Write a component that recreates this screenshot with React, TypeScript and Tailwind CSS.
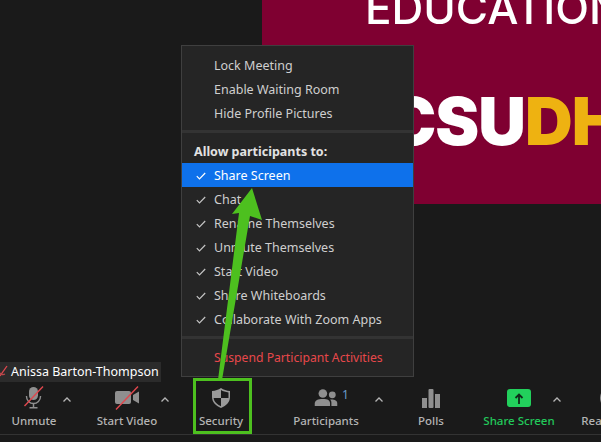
import { ReactNode } from 'react';

const font = { fontFamily: '"Noto Sans", "Open Sans", sans-serif' };

const permissions = ['Share Screen', 'Chat', 'Rename Themselves', 'Unmute Themselves', 'Start Video', 'Share Whiteboards', 'Collaborate With Zoom Apps'];

function Check({ light }: { light?: boolean }) {
  return (
    <svg width="10" height="8" viewBox="0 0 10 8" className="mr-[8px] ml-[14px]" fill="none">
      <path d="M0.8 4.2 L3.5 7 L9.2 1" stroke={light ? '#ffffff' : '#c4c4c4'} strokeWidth="1.2" />
    </svg>
  );
}

function Chevron({ className }: { className: string }) {
  return (
    <div className={`w-[8px] h-[40px] pt-[12px] shrink-0 ${className}`}>
      <svg width="8" height="5" viewBox="0 0 8 5" fill="none">
        <path d="M0.5 4.5 L4 1 L7.5 4.5" stroke="#b5b5b5" strokeWidth="1.3" />
      </svg>
    </div>
  );
}

function ToolItem({ label, className, green, children }: { label: string; className: string; green?: boolean; children: ReactNode }) {
  return (
    <div className={`flex flex-col items-center shrink-0 ${className}`}>
      <div className="h-[26px] flex items-center justify-center">{children}</div>
      <div className={`mt-[2px] text-[11.5px] leading-[16px] font-medium whitespace-nowrap ${green ? 'text-[#22c95a]' : 'text-[#b4b4b4]'}`}>{label}</div>
    </div>
  );
}

function Toolbar() {
  return (
    <div className="flex h-[49px] mb-[7px] border-b border-[#333333] pt-[7px] box-content">
      <ToolItem label="Unmute" className="ml-[5px] w-[58px]">
        <svg width="20" height="24" viewBox="0 0 20 24" fill="none">
          <rect x="5" y="1" width="9" height="13" rx="4.5" fill="#8f8f8f" />
          <path d="M2.5 10 V10.5 A7 7 0 0 0 16.5 10.5 V10" stroke="#8f8f8f" strokeWidth="1.4" />
          <path d="M9.5 17 V21 M5.5 21.7 H13.5" stroke="#8f8f8f" strokeWidth="1.5" />
          <path d="M0.5 20 L19 0.5" stroke="#e0484e" strokeWidth="1.4" />
        </svg>
      </ToolItem>
      <Chevron className="" />
      <ToolItem label="Start Video" className="ml-[22px] w-[68px]">
        <svg width="24" height="24" viewBox="0 0 24 24" fill="none">
          <rect x="0" y="5" width="16" height="13" rx="2" fill="#8f8f8f" />
          <path d="M18 9 L24 5.5 V17.5 L18 14 Z" fill="#8f8f8f" />
          <path d="M1 23.5 L23 0.5" stroke="#e0484e" strokeWidth="1.4" />
        </svg>
      </ToolItem>
      <Chevron className="" />
      <ToolItem label="Security" className="ml-[21px] w-[62px]">
        <svg width="18" height="20" viewBox="0 0 18 20">
          <path d="M9 0 C11.5 1.8 14.5 2.8 18 3 V9 C18 14 14.5 17.8 9 20 C3.5 17.8 0 14 0 9 V3 C3.5 2.8 6.5 1.8 9 0 Z" fill="#9a9a9a" />
          <path d="M9 2 C11 3.3 13.5 4.2 16.5 4.4 V10 H9 Z" fill="#1a1a1a" />
          <path d="M1.6 10 H9 V18.2 C5 16.4 2 13.8 1.6 10 Z" fill="#1a1a1a" />
        </svg>
      </ToolItem>
      <ToolItem label="Participants" className="ml-[39px] w-[70px]">
        <div className="relative w-[24px] flex items-center">
          <svg width="24" height="18" viewBox="0 0 26 20" className="shrink-0">
            <circle cx="9.5" cy="5" r="4.8" fill="#8f8f8f" />
            <circle cx="20" cy="6.5" r="3.8" fill="#8f8f8f" />
            <path d="M0.5 19 V16 C0.5 12.5 4 11 9.5 11 C15 11 17.5 12.5 17.5 16 V19 Z" fill="#8f8f8f" />
            <path d="M19 19 V15.5 C19 14 18.5 12.8 17.6 11.8 C22 11.3 25.5 12.8 25.5 15.5 V19 Z" fill="#8f8f8f" />
          </svg>
          <span className="absolute left-[28px] -top-[2px] text-[12px] leading-[16px] text-[#6a9ccc]">1</span>
        </div>
      </ToolItem>
      <Chevron className="ml-[14px]" />
      <ToolItem label="Polls" className="ml-[18px] w-[60px]">
        <svg width="18" height="19" viewBox="0 0 18 19">
          <rect x="0" y="9" width="5" height="10" fill="#8f8f8f" />
          <rect x="6.5" y="0" width="5" height="19" rx="1" fill="#8f8f8f" />
          <rect x="13" y="5" width="5" height="14" fill="#8f8f8f" />
        </svg>
      </ToolItem>
      <ToolItem label="Share Screen" green className="ml-[23px] w-[70px]">
        <div className="w-[24px] h-[18px] rounded-[3px] bg-[#22d05c] flex items-center justify-center">
          <svg width="10" height="11" viewBox="0 0 10 11" fill="none">
            <path d="M5 11 V2 M1.5 5 L5 1.5 L8.5 5" stroke="#10281a" strokeWidth="1.8" />
          </svg>
        </div>
      </ToolItem>
      <Chevron className="-ml-[1px]" />
      <ToolItem label="Reactions" className="ml-[17px] w-[60px]">
        <div className="w-[22px] h-[22px] ml-[6px] rounded-full bg-[#8f8f8f]" />
      </ToolItem>
    </div>
  );
}

function SecurityMenu() {
  return (
    <div className="absolute left-[181px] top-[45px] w-[233px] h-[332px] bg-[#252525] border border-[#3f3f3f] text-[12.5px] text-[#cfcfcf]">
      <div className="pt-[8px]">
        {['Lock Meeting', 'Enable Waiting Room', 'Hide Profile Pictures'].map((item) => (
          <div key={item} className="h-[24px] leading-[24px] pl-[32px]">{item}</div>
        ))}
      </div>
      <div className="mt-[4px] h-[3px] bg-[#333333]" />
      <div className="mt-[6px] h-[24px] leading-[26px] pl-[12px] font-bold text-[#e2e2e2]">Allow participants to:</div>
      {permissions.map((item, i) => (
        <div key={item} className={`h-[24px] pt-[2px] flex items-center ${i === 0 ? 'bg-[#0e71eb] text-white' : ''}`}>
          <Check light={i === 0} />
          <span>{item}</span>
        </div>
      ))}
      <div className="mt-[5px] h-[3px] bg-[#333333]" />
      <div className="mt-[7px] h-[24px] leading-[24px] pl-[32px] text-[12.2px] text-[#e8484b]">Suspend Participant Activities</div>
    </div>
  );
}

export default function App() {
  return (
    <div className="relative w-[601px] h-[442px] overflow-hidden bg-[#1a1a1a] flex flex-col justify-between" style={font}>
      {/* shared slide */}
      <div className="ml-[262px] h-[204px] bg-[#7f0031] overflow-hidden blur-[0.4px]">
        <div className="-mt-[20px] ml-[103px] text-[44px] leading-[56px] font-medium text-white whitespace-nowrap" style={{ fontFamily: 'Inter, sans-serif' }}>
          EDUCATION
        </div>
        <div className="mt-[45px] ml-[125px] text-[66px] leading-[80px] font-black whitespace-nowrap tracking-[-1px] text-white" style={{ fontFamily: 'Inter, sans-serif' }}>
          CSU<span className="text-[#eeb211]">DH</span>
        </div>
      </div>

      <Toolbar />

      {/* name tag */}
      <div className="absolute left-0 top-[362px] w-[161px] h-[20px] bg-[#2b2b2b] flex items-center text-[12.5px] text-white">
        <svg width="8" height="16" viewBox="0 0 8 16" className="mr-[3px]" fill="none">
          <path d="M0 12 L7 2" stroke="#e0484e" strokeWidth="1.3" />
          <path d="M-1 7 A4 4 0 0 0 5 10" stroke="#b8484c" strokeWidth="1.2" />
        </svg>
        <span className="whitespace-nowrap">Anissa Barton-Thompson</span>
      </div>

      <SecurityMenu />

      {/* green annotation */}
      <div className="absolute left-[193px] top-[378px] w-[59px] h-[56px] border-[3px] border-[#4dc01f]" />
      <svg className="absolute left-0 top-0" width="601" height="442" viewBox="0 0 601 442">
        <path d="M252 188 L262 220 L250 216 L222 380 L218 380 L239 213 L232 214 Z" fill="#4dc01f" />
      </svg>
    </div>
  );
}
